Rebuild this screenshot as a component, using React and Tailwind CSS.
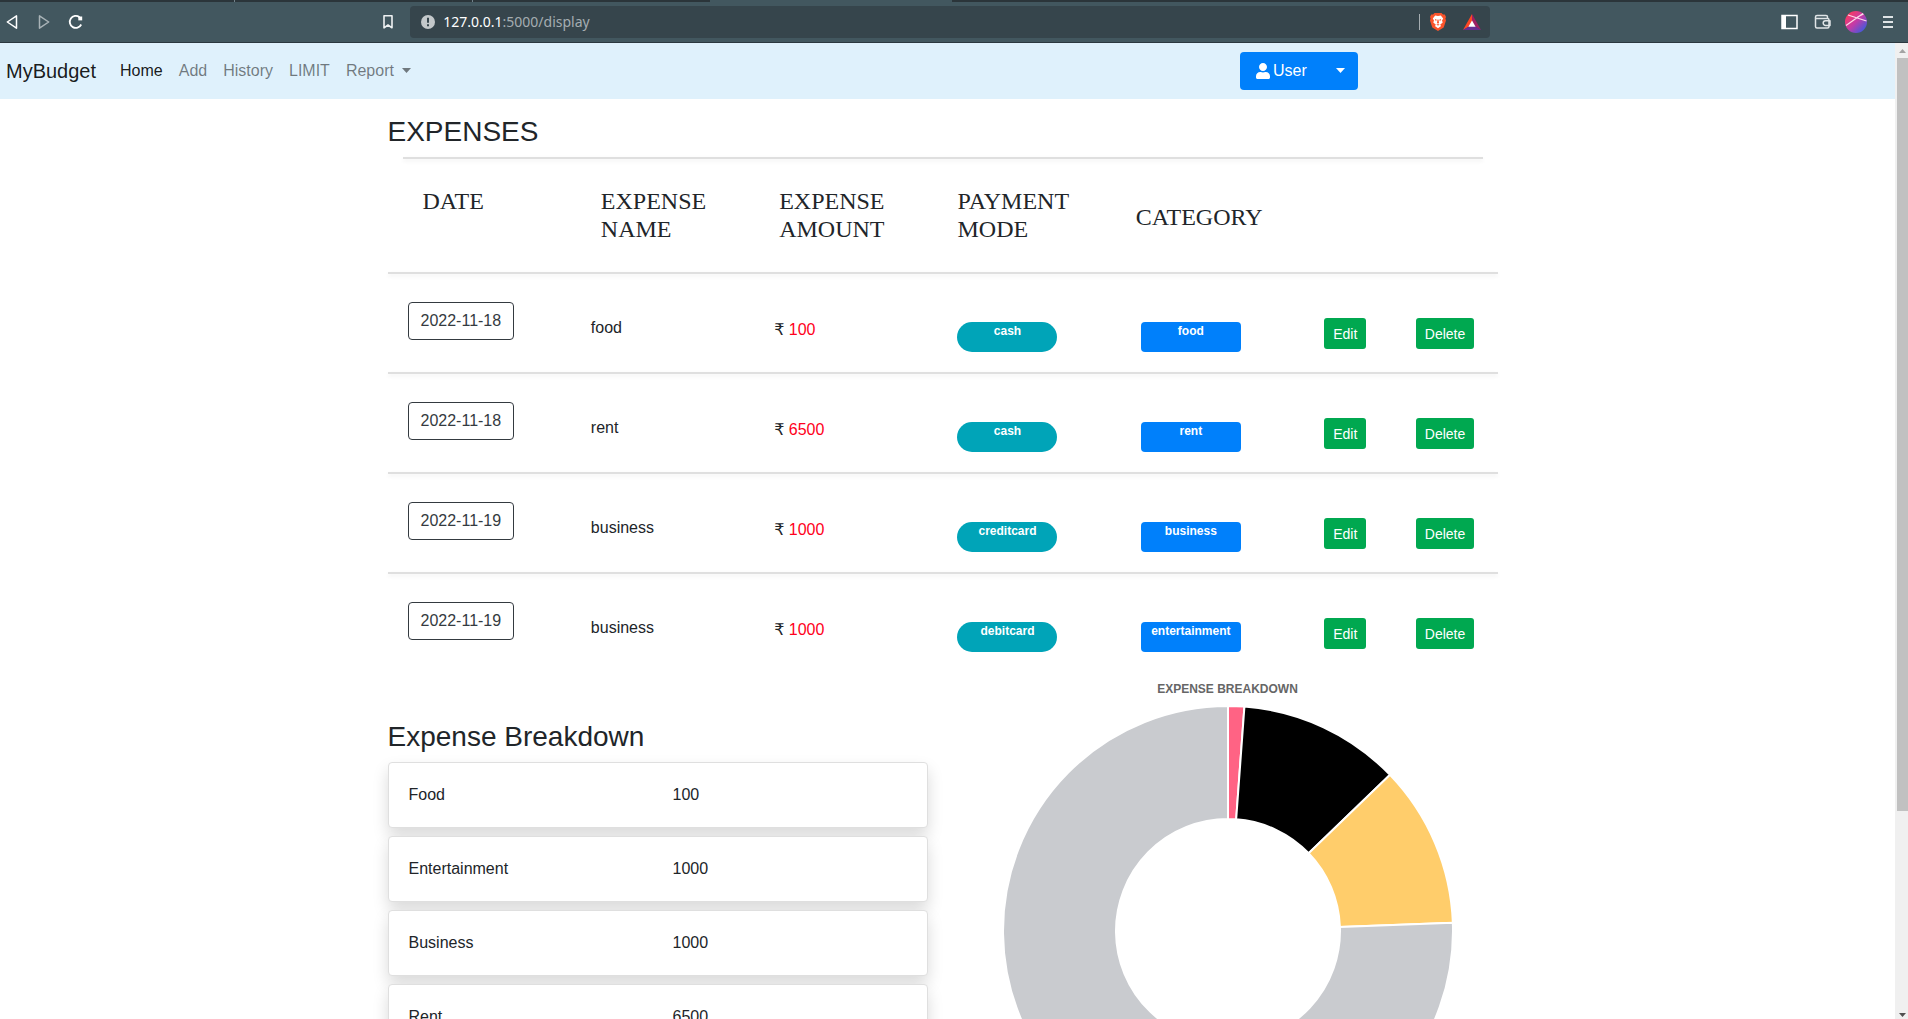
import React from "react";
import { FaUser } from "react-icons/fa";

const HEADERS = ["DATE", "EXPENSE NAME", "EXPENSE AMOUNT", "PAYMENT MODE"];

const EXPENSES = [
  { date: "2022-11-18", name: "food", amount: 100, mode: "cash", category: "food" },
  { date: "2022-11-18", name: "rent", amount: 6500, mode: "cash", category: "rent" },
  { date: "2022-11-19", name: "business", amount: 1000, mode: "creditcard", category: "business" },
  { date: "2022-11-19", name: "business", amount: 1000, mode: "debitcard", category: "entertainment" },
];

const TOTALS = [
  { label: "Food", value: 100, color: "#ff6384" },
  { label: "Entertainment", value: 1000, color: "#000000" },
  { label: "Business", value: 1000, color: "#ffcd6b" },
  { label: "Rent", value: 6500, color: "#c9cbcf" },
];

function Divider() {
  return <div className="h-0.5 bg-[#dfdfdf] shadow-[0_2px_4px_rgba(0,0,0,0.075)]" />;
}

function Caret() {
  return (
    <svg className="mb-0.5" width="9" height="5" viewBox="0 0 9 5" fill="currentColor" aria-hidden="true">
      <path d="M0 0h9L4.500 5z" />
    </svg>
  );
}

function Toolbar() {
  return (
    <header className="shrink-0 border-b border-[#2b383f] bg-[#42575f] text-white">
      <div className="flex h-[2px] bg-[#2b353a]">
        <span className="w-[12.300%] border-r border-[#72828a]" />
        <span className="w-[12.500%] border-r border-[#72828a]" />
        <span className="w-[12.400%]" />
        <span className="w-[12.700%] bg-[#42575f]" />
      </div>
      <div className="flex h-10 items-center">
        <div className="flex w-[21.500%] items-center">
          <button aria-label="Back" className="ml-1.5">
            <svg width="12" height="16" viewBox="0 0 12 16" fill="none" stroke="#fff" strokeWidth="1.500" strokeLinejoin="round">
              <path d="M10.500 1.800v12.400L1.300 8z" />
            </svg>
          </button>
          <button aria-label="Forward" className="ml-5">
            <svg width="12" height="16" viewBox="0 0 12 16" fill="none" stroke="#a9b3b7" strokeWidth="1.500" strokeLinejoin="round">
              <path d="M1.500 1.800v12.400L10.700 8z" />
            </svg>
          </button>
          <button aria-label="Reload" className="ml-[18px]">
            <svg width="16" height="16" viewBox="0 0 16 16" fill="none" stroke="#fff" strokeWidth="1.800">
              <path d="M13.200 10.500A6 6 0 1 1 11.500 3.200" />
              <path d="M10.300 2.500h3.900v3.900h-3.900z" fill="#fff" stroke="none" />
            </svg>
          </button>
          <button aria-label="Bookmark" className="ml-auto mr-4">
            <svg width="12" height="16" viewBox="0 0 12 16" fill="none" stroke="#eef1f2" strokeWidth="1.600" strokeLinejoin="round">
              <path d="M2 1.800h8v12L6 11l-4 2.800z" />
            </svg>
          </button>
        </div>
        <div className="flex h-8 w-[56.600%] items-center rounded bg-[#36454c] pl-[11px] pr-[9px]">
          <svg width="14" height="14" viewBox="0 0 14 14" aria-hidden="true">
            <circle cx="7" cy="7" r="7" fill="#c3c8ca" />
            <path d="M6 2.800h2v5H6zM6 9.200h2v2H6z" fill="#36454c" />
          </svg>
          <p className="ml-2 font-['Noto_Sans',sans-serif] text-sm text-white">
            127.0.0.1<span className="text-[#a5adb1]">:5000/display</span>
          </p>
          <span className="ml-auto h-4 w-px bg-[#a5adb1]" />
          <button aria-label="Shields" className="ml-[9px]">
            <svg width="18" height="18" viewBox="0 0 18 18">
              <path d="M5.500 0h7l1.500 1.600 1.800-.2L17 4l-.6 1.600.6 1.800-2.300 7.200L9 18l-5.700-3.400L1 7.400l.6-1.800L1 4l1.200-2.600 1.800.2z" fill="#fb542b" />
              <path d="M9 3l2.800-.4 2.400 3-1.200 1.800.7 2.100-2.600 2.200 1 1.300L9 15.300 5.900 13l1-1.300-2.600-2.200.7-2.100-1.200-1.800 2.400-3z" fill="#fff" />
              <path d="M5.800 5.800l2 .9-.9 1.500zM12.200 5.800l-2 .9.900 1.500zM8.500 6.500h1L10 10l-1 .8L8 10zM7.300 11.700L9 11l1.700.7L9 12.600z" fill="#fb542b" />
            </svg>
          </button>
          <button aria-label="Rewards" className="ml-4">
            <svg width="18" height="16" viewBox="0 0 18 16">
              <path d="M9 0L0 16l9-5z" fill="#ff4724" />
              <path d="M9 0l9 16-9-5z" fill="#9e1f63" />
              <path d="M0 16h18l-9-5.500z" fill="#662d91" />
              <path d="M9 6.500l3.600 6.300H5.400z" fill="#fff" />
            </svg>
          </button>
        </div>
        <div className="ml-auto flex items-center pr-[15px]">
          <button aria-label="Sidebar">
            <svg width="17" height="16" viewBox="0 0 17 16" fill="none">
              <path d="M1 1.500h15v13H1z" stroke="#fff" strokeWidth="1.500" />
              <path d="M1 1.500h4v13H1z" fill="#fff" />
            </svg>
          </button>
          <button aria-label="Wallet" className="ml-4">
            <svg width="17" height="16" viewBox="0 0 17 16" fill="none" stroke="#dfe4e6" strokeWidth="1.500" strokeLinejoin="round">
              <path d="M13.500 4.500V2.800Q13.500 1.500 12 1.500H3Q1.500 1.500 1.500 3v9.500q0 1.500 1.500 1.500h10.500q1.500 0 1.500-1.500V6q0-1.500-1.500-1.500H1.500" />
              <path d="M16 6.800h-4.500a2.300 2.300 0 0 0 0 4.600H16z" />
            </svg>
          </button>
          <button aria-label="Profile" className="ml-3.5">
            <svg width="22" height="22" viewBox="0 0 22 22">
              <defs>
                <linearGradient id="avatar" x1="0.100" y1="0.100" x2="0.900" y2="0.900">
                  <stop offset="0" stopColor="#ff3a5c" />
                  <stop offset="0.500" stopColor="#c23ba8" />
                  <stop offset="1" stopColor="#3a5be0" />
                </linearGradient>
              </defs>
              <circle cx="11" cy="11" r="11" fill="url(#avatar)" />
              <path d="M1 14.500L18 2.500M3 4l18.500 6M12.500 6l6-3" stroke="#ffd9ea" strokeWidth="1.200" fill="none" />
            </svg>
          </button>
          <button aria-label="Menu" className="ml-4">
            <svg width="10" height="12" viewBox="0 0 10 12" fill="#dfe4e6">
              <path d="M0 0h10v2H0zM0 5h10v2H0zM0 10h10v2H0z" />
            </svg>
          </button>
        </div>
      </div>
    </header>
  );
}

function Navbar() {
  return (
    <nav className="grid h-14 grid-cols-[1240fr_655fr] items-center bg-[#dff1fc]">
      <div className="flex items-center gap-4 pl-1.5 text-black/50">
        <a href="#" className="mr-2 text-xl text-black/90">MyBudget</a>
        <a href="#" className="text-black/90">Home</a>
        <a href="#">Add</a>
        <a href="#">History</a>
        <a href="#">LIMIT</a>
        <button className="flex items-center gap-2">Report <Caret /></button>
      </div>
      <div className="flex text-white">
        <button className="flex h-[38px] items-center gap-[3px] rounded-l bg-[#0080fb] pl-4 pr-3">
          <FaUser className="h-4 w-[14px]" />User
        </button>
        <button aria-label="User menu" className="flex h-[38px] items-center rounded-r bg-[#0080fb] pl-[17px] pr-[13px]">
          <Caret />
        </button>
      </div>
    </nav>
  );
}

function ExpenseRow({ item }) {
  return (
    <div className="h-[100px]">
      <Divider />
      <div className="grid grid-cols-[2fr_2fr_2fr_2fr_2fr_1fr_1fr] items-start px-[5px]">
        <div className="px-[15px] pt-7">
          <button className="h-[38px] rounded border border-[#343a40] px-3 text-[#343a40]">{item.date}</button>
        </div>
        <p className="px-[15px] pt-[42px]">{item.name}</p>
        <p className="px-[15px] pt-11">
          <span className="font-['DejaVu_Sans',sans-serif] leading-none">₹</span>{" "}
          <span className="text-[#ff0020]">{item.amount}</span>
        </p>
        <div className="px-[15px] pt-12">
          <p className="h-[30px] w-[100px] rounded-full bg-[#00a4b8] pt-[3px] text-center text-xs font-bold leading-3 text-white">{item.mode}</p>
        </div>
        <div className="px-[15px] pt-12">
          <p className="h-[30px] w-[100px] rounded bg-[#0080fb] pt-[3px] text-center text-xs font-bold leading-3 text-white">{item.category}</p>
        </div>
        <div className="px-[15px] pt-11">
          <button className="h-[31px] rounded-[3px] bg-[#00a850] px-[9px] text-sm text-white">Edit</button>
        </div>
        <div className="px-[15px] pt-11">
          <button className="h-[31px] rounded-[3px] bg-[#00a850] px-[9px] text-sm text-white">Delete</button>
        </div>
      </div>
    </div>
  );
}

function Doughnut() {
  const total = TOTALS.reduce((sum, t) => sum + t.value, 0);
  const point = (share, r) => {
    const a = share * 2 * Math.PI;
    return `${225 + r * Math.sin(a)} ${225 - r * Math.cos(a)}`;
  };
  let start = 0;
  return (
    <svg className="w-5/6" viewBox="0 0 450 450" role="img" aria-label="Expense breakdown">
      {TOTALS.map((t) => {
        const from = start;
        const to = start + t.value / total;
        start = to;
        const large = to - from > 0.5 ? 1 : 0;
        return (
          <path
            key={t.label}
            d={`M${point(from, 225)}A225 225 0 ${large} 1 ${point(to, 225)}L${point(to, 112)}A112 112 0 ${large} 0 ${point(from, 112)}Z`}
            fill={t.color}
            stroke="#fff"
            strokeWidth="2"
          />
        );
      })}
    </svg>
  );
}

function Scrollbar() {
  return (
    <div className="flex w-[13px] shrink-0 flex-col items-end bg-[#f0f0f0] text-[#a3a3a3]" aria-hidden="true">
      <svg className="h-[15px] w-[11px] shrink-0" viewBox="0 0 11 15"><path d="M2 10h7L5.500 6z" fill="currentColor" /></svg>
      <div className="w-[11px] flex-[753] bg-[#c1c1c1]" />
      <div className="flex-[194]" />
      <svg className="h-[14px] w-[11px] shrink-0" viewBox="0 0 11 14"><path d="M2 8h7L5.500 12z" fill="#505050" /></svg>
    </div>
  );
}

export default function App() {
  return (
    <div className="flex h-screen flex-col overflow-hidden bg-white font-['Liberation_Sans',Arial,sans-serif] text-base text-[#212529]">
      <Toolbar />
      <div className="flex min-h-0 flex-1">
        <div className="min-w-0 flex-1 overflow-hidden">
          <Navbar />
          <div className="pr-2.5">
            <main className="mx-auto max-w-[1110px] pt-4">
              <h3 className="mb-2 text-[28px] leading-[34px]">EXPENSES</h3>
              <section>
                <div className="mx-[15px] h-[115px]">
                  <Divider />
                  <div className="grid grid-cols-6 px-[5px] pt-7 font-['Liberation_Serif',serif] text-2xl leading-7">
                    {HEADERS.map((h) => (
                      <h4 key={h} className="px-[15px]">{h}</h4>
                    ))}
                    <h4 className="px-[15px] pt-4">CATEGORY</h4>
                  </div>
                </div>
                {EXPENSES.map((item, i) => (
                  <ExpenseRow key={i} item={item} />
                ))}
              </section>
              <section className="grid grid-cols-2 gap-[30px]">
                <div className="pt-12">
                  <h3 className="mb-2 text-[28px] leading-[34px]">Expense Breakdown</h3>
                  <div className="flex flex-col gap-2">
                    {TOTALS.map((t) => (
                      <div key={t.label} className="grid h-[66px] grid-cols-2 items-center gap-x-[30px] rounded border border-[#dfdfdf] bg-white px-5 shadow-[0_8px_16px_rgba(0,0,0,0.15)]">
                        <p>{t.label}</p>
                        <p>{t.value}</p>
                      </div>
                    ))}
                  </div>
                </div>
                <div className="flex flex-col items-center">
                  <h4 className="py-2.5 text-xs font-bold leading-[14px] text-[#666]">EXPENSE BREAKDOWN</h4>
                  <Doughnut />
                </div>
              </section>
            </main>
          </div>
        </div>
        <Scrollbar />
      </div>
    </div>
  );
}
